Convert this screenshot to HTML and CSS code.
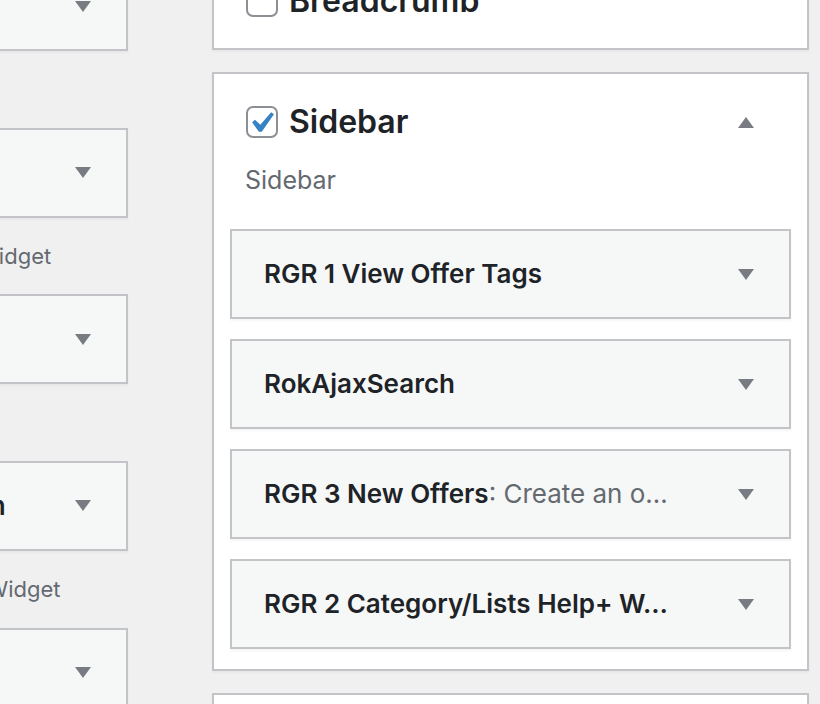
FILE: index.html
```html
<!DOCTYPE html>
<html lang="en">
<head>
<meta charset="utf-8">
<title>Widgets</title>
<link rel="stylesheet" href="styles.css">
</head>
<body>
<div class="screen">
  <div class="available">
    <div class="avail-item">
      <div class="widget"><span class="widget-title">Archives</span><svg class="arrow" viewBox="0 0 16 11"><path d="M0 0h16L8 11z"/></svg></div>
      <div class="widget-desc">Posts archive.</div>
    </div>
    <div class="avail-item">
      <div class="widget"><span class="widget-title">Calendar</span><svg class="arrow" viewBox="0 0 16 11"><path d="M0 0h16L8 11z"/></svg></div>
      <div class="widget-desc">Displays the RokAjaxSearch Widget</div>
    </div>
    <div class="avail-item">
      <div class="widget"><span class="widget-title">Categories</span><svg class="arrow" viewBox="0 0 16 11"><path d="M0 0h16L8 11z"/></svg></div>
      <div class="widget-desc">Site categories.</div>
    </div>
    <div class="avail-item">
      <div class="widget"><span class="widget-title">RGR 4: Custom Location</span><svg class="arrow" viewBox="0 0 16 11"><path d="M0 0h16L8 11z"/></svg></div>
      <div class="widget-desc">Displays a Gantry Navigation Widget</div>
    </div>
    <div class="avail-item">
      <div class="widget"><span class="widget-title">Meta</span><svg class="arrow" viewBox="0 0 16 11"><path d="M0 0h16L8 11z"/></svg></div>
      <div class="widget-desc">Login, RSS and links.</div>
    </div>
  </div>

  <div class="sidebars">
    <section class="area collapsed">
      <div class="area-head">
        <span class="checkbox"></span>
        <h2 class="area-title">Breadcrumb</h2>
      </div>
    </section>

    <section class="area">
      <div class="area-head">
        <span class="checkbox checked"><svg viewBox="0 0 20 20"><path d="M14.83 4.89l1.34.94-5.81 8.38H9.02L5.78 9.67l1.34-1.250 2.57 2.4z"/></svg></span>
        <h2 class="area-title">Sidebar</h2>
        <svg class="arrow" viewBox="0 0 16 11"><path d="M0 11h16L8 0z"/></svg>
      </div>
      <p class="area-desc">Sidebar</p>
      <div class="area-widgets">
        <div class="widget"><span class="widget-title">RGR 1 View Offer Tags</span><svg class="arrow" viewBox="0 0 16 11"><path d="M0 0h16L8 11z"/></svg></div>
        <div class="widget"><span class="widget-title">RokAjaxSearch</span><svg class="arrow" viewBox="0 0 16 11"><path d="M0 0h16L8 11z"/></svg></div>
        <div class="widget"><span class="widget-title">RGR 3 New Offers<span class="in-title">: Create an o…</span></span><svg class="arrow" viewBox="0 0 16 11"><path d="M0 0h16L8 11z"/></svg></div>
        <div class="widget"><span class="widget-title">RGR 2 Category/Lists Help+ W…</span><svg class="arrow" viewBox="0 0 16 11"><path d="M0 0h16L8 11z"/></svg></div>
      </div>
    </section>

    <section class="area next"></section>
  </div>
</div>
</body>
</html>
```

FILE: styles.css
```css
html, body {
  margin: 0;
  height: 704px;
  overflow: hidden;
  background: #f0f0f1;
}

body {
  font-family: Inter, "Noto Sans", sans-serif;
  color: #1d2327;
}

.screen {
  display: flex;
  align-items: flex-start;
  gap: 84px;
}

/* Available widgets column (partly off screen) */
.available {
  flex: none;
  width: 461px;
  margin-left: -333px;
  margin-top: -39px;
  display: flex;
  flex-direction: column;
}

.avail-item {
  display: flex;
  flex-direction: column;
}

.widget-desc {
  box-sizing: border-box;
  height: 76.67px;
  padding: 22px 14px 0;
  font-size: 22px;
  line-height: 33px;
  color: #646970;
  white-space: nowrap;
}

/* Widget bar */
.widget {
  box-sizing: border-box;
  height: 90px;
  display: flex;
  align-items: center;
  justify-content: space-between;
  padding: 0 35px 0 32px;
  background: #f6f7f7;
  border: 2px solid #c3c4c7;
  box-shadow: 0 2px 2px rgba(0, 0, 0, 0.04);
}

.widget-title {
  min-width: 0;
  font-size: 26px;
  font-weight: 600;
  line-height: 36px;
  color: #1d2327;
  white-space: nowrap;
  overflow: hidden;
  text-overflow: ellipsis;
}

.in-title {
  font-weight: 400;
  color: #646970;
}

.arrow {
  flex: none;
  width: 16px;
  height: 11px;
  fill: #787c82;
}

/* Sidebar areas */
.sidebars {
  flex: none;
  width: 597px;
  margin-top: -49px;
  display: flex;
  flex-direction: column;
  gap: 22px;
}

.area {
  background: #fff;
  border: 2px solid #c3c4c7;
  box-shadow: 0 2px 2px rgba(0, 0, 0, 0.04);
}

.area.collapsed {
  padding-bottom: 29px;
}

.area.next {
  height: 120px;
}

.area-head {
  display: flex;
  align-items: center;
  padding: 30px 53px 0 32px;
}

.checkbox {
  flex: none;
  position: relative;
  box-sizing: border-box;
  width: 32px;
  height: 32px;
  border: 2px solid #8c8f94;
  border-radius: 7px;
  background: #fff;
}

.checkbox svg {
  position: absolute;
  left: -8px;
  top: -6px;
  width: 42px;
  height: 42px;
  fill: #3582c4;
}

.area-title {
  flex: 1;
  margin: 0 0 0 11px;
  font-size: 32px;
  font-weight: 600;
  line-height: 36px;
  color: #1d2327;
}

.area-desc {
  margin: 22px 0 0 31px;
  font-size: 25px;
  line-height: 36px;
  color: #646970;
}

.area-widgets {
  display: flex;
  flex-direction: column;
  gap: 20px;
  padding: 31px 16px 20px;
}
```
